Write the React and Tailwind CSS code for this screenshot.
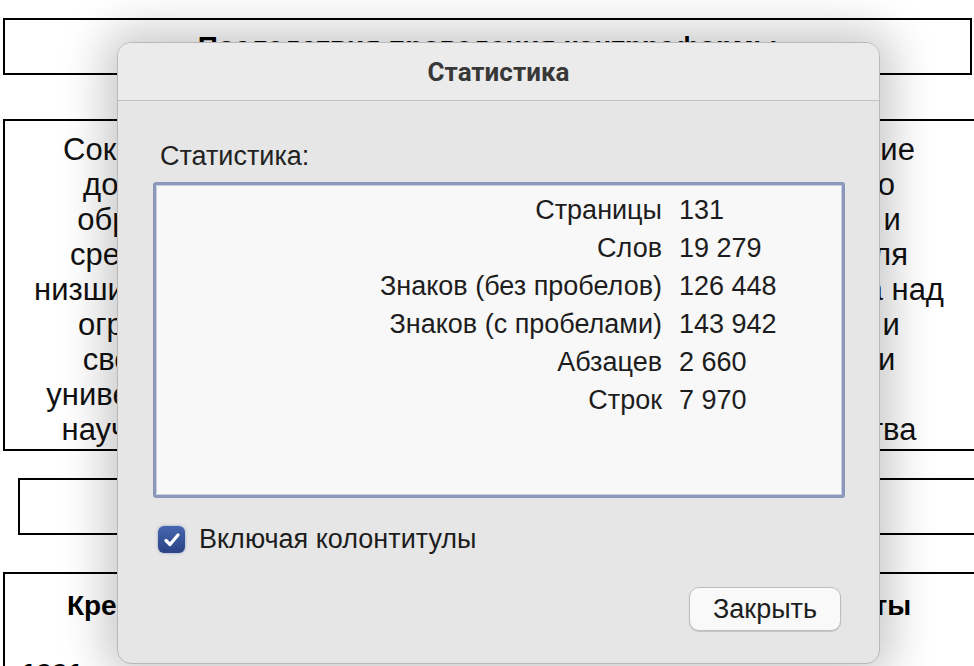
import React from "react";

const docLines = [
  "Сокращение числа начальных школ и полное упразднение",
  "доступа к гимназическому образованию детей и низкого",
  "образования, рост влияния церквей, усиление надзора и",
  "среднего образования: гимназии были почти закрыты для",
  "низших слоёв общества, и усиление контроля государства над",
  "ограничение автономии университетов, отмена свобод и",
  "свободы преподавания, запрет собраний со студентами",
  "университетов, введение высокой платы за обучение,\u00a0\u00a0\u00a0\u00a0\u00a0\u00a0\u00a0\u00a0\u00a0\u00a0\u00a0\u00a0",
  "научной и общественной деятельности всего студенчества",
];

const stats = [
  ["Страницы", "131"],
  ["Слов", "19 279"],
  ["Знаков (без пробелов)", "126 448"],
  ["Знаков (с пробелами)", "143 942"],
  ["Абзацев", "2 660"],
  ["Строк", "7 970"],
];

export default function App() {
  return (
    <div className="relative w-[974px] h-[666px] overflow-hidden bg-white text-black" style={{ fontFamily: '"Liberation Sans", Arial, sans-serif' }}>
      {/* Document */}
      <div className="flex flex-col pt-[18px]">
        <div className="ml-[3px] w-[969px] h-[57px] border-2 border-black flex items-center justify-center">
          <div className="text-[28px] font-bold whitespace-nowrap leading-none">Последствия проведения контрреформы</div>
        </div>
        <div className="ml-[3px] w-[990px] h-[332px] mt-[44px] border-2 border-black pt-[11px] pr-[18px] text-[#111]">
          {docLines.map((l, i) => (
            <div key={i} className="text-center whitespace-pre text-[31px] leading-[35px]">{l}</div>
          ))}
        </div>
        <div className="ml-[18px] w-[990px] h-[57px] mt-[27px] border-2 border-black" />
        <div className="ml-[3px] w-[990px] h-[120px] mt-[37px] border-2 border-black pt-[16px] pr-[18px]">
          <div className="text-center whitespace-nowrap text-[28px] font-bold leading-[32px]">Крестьянская реформа 1861 года и её основные результаты</div>
          <div className="pl-[16px] mt-[36px] text-[28px] font-bold leading-[32px]">1991</div>
        </div>
      </div>

      {/* Dialog */}
      <div className="absolute left-[117px] top-[42px] w-[763px] h-[622px] rounded-[14px] bg-[#e6e6e6] border border-[#b9b9b9] shadow-[0_0_45px_12px_rgba(0,0,0,0.22)] overflow-hidden flex flex-col">
        <div className="h-[58px] bg-[#ebebeb] border-b border-[#c2c2c2] flex items-center justify-center">
          <div className="text-[26px] font-bold text-[#383838] leading-none" style={{ fontFamily: 'Roboto, "Liberation Sans", sans-serif' }}>Статистика</div>
        </div>
        <div className="flex flex-col pl-[42px] pr-[34px]">
          <div className="mt-[39px] text-[27px] leading-[32px] text-[#222]">Статистика:</div>
          <div className="mt-[10px] ml-[-7px] h-[316px] rounded-[3px] border-[3px] border-[#8c98ba] bg-[#f8f8f8] shadow-[inset_0_0_0_1px_#c9d0e4] pt-[6px]">
            {stats.map(([k, v]) => (
              <div key={k} className="grid grid-cols-[506px_1fr] text-[27px] leading-[38px] text-[#1d1d1d]">
                <div className="text-right whitespace-nowrap">{k}</div>
                <div className="pl-[17px] whitespace-nowrap">{v}</div>
              </div>
            ))}
          </div>
          <div className="mt-[28px] ml-[-2px] h-[27px] flex items-center gap-[14px]">
            <div className="w-[27px] h-[27px] rounded-[6px] bg-gradient-to-b from-[#4566b0] to-[#2c4384] flex items-center justify-center shadow-[0_0_3px_rgba(60,90,170,0.5)]">
              <svg width="18" height="16" viewBox="0 0 18 16">
                <path d="M3 8.5 L7 12.5 L15 3" fill="none" stroke="white" strokeWidth="3.2" strokeLinecap="round" strokeLinejoin="round" />
              </svg>
            </div>
            <div className="text-[27px] leading-none text-[#1d1d1d] whitespace-nowrap">Включая колонтитулы</div>
          </div>
          <div className="mt-[34px] flex justify-end">
            <div className="w-[152px] h-[44px] mr-[4px] rounded-[10px] bg-[#f9f9f9] border border-[#bdbdbd] shadow-[0_1px_1px_rgba(0,0,0,0.15)] flex items-center justify-center text-[27px] leading-none text-[#1d1d1d]">Закрыть</div>
          </div>
        </div>
      </div>
    </div>
  );
}
